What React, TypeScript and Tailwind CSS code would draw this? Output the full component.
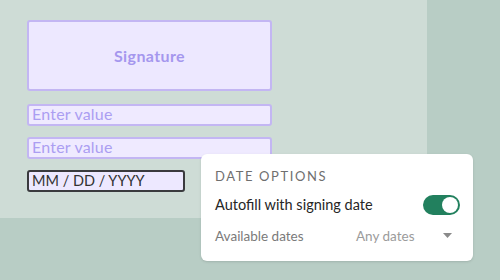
import React from "react";

function Toggle() {
  return (
    <div className="w-[37px] h-[20px] rounded-full bg-[#22805e] flex items-center justify-end pr-[2px]">
      <div className="w-[16px] h-[16px] rounded-full bg-white" />
    </div>
  );
}

function DateOptions() {
  return (
    <div className="absolute left-[201px] top-[154px] w-[272px] h-[107px] bg-white rounded-md shadow-sm pl-[14px] pr-[13px] pt-[14px] font-['Lato',sans-serif]">
      <div className="text-[13px] leading-[16px] tracking-[1.6px] text-[#6f6f6f]">DATE OPTIONS</div>
      <div className="mt-[10px] flex items-center justify-between">
        <span className="text-[14.5px] text-[#262626]">Autofill with signing date</span>
        <Toggle />
      </div>
      <div className="mt-[10px] flex items-center">
        <span className="text-[13.5px] text-[#7a7a7a] w-[141px]">Available dates</span>
        <span className="text-[13.5px] text-[#9b9b9b] flex-1">Any dates</span>
        <svg width="9" height="5" viewBox="0 0 9 5" className="mr-[8px]">
          <path d="M0 0 H9 L4.5 5 Z" fill="#8a8a8a" />
        </svg>
      </div>
    </div>
  );
}

function Field({ text }: { text: string }) {
  return (
    <div className="w-[245px] h-[22px] rounded-[3px] border-2 border-[#c3b6f3] bg-[#efeaff] flex items-center pl-[3px] pb-[2px]">
      <span className="font-['Lato',sans-serif] text-[16px] tracking-[0.2px] text-[#ab9ef2]">{text}</span>
    </div>
  );
}

export default function App() {
  return (
    <div className="w-[500px] h-[280px] bg-[#b8cdc5] relative overflow-hidden">
      <div className="w-[427px] h-[218px] bg-[#cedcd6] pt-[20px] pl-[27px] flex flex-col gap-[11px]">
        <div className="w-[245px] h-[71px] rounded-[3px] border-2 border-[#c3b6f3] bg-[#ede8ff] flex items-center justify-center mb-[2px]">
          <span className="font-['Lato',sans-serif] font-bold text-[16px] tracking-[0.4px] text-[#a597ee]">Signature</span>
        </div>
        <Field text="Enter value" />
        <Field text="Enter value" />
        <div className="w-[158px] h-[22px] rounded-[3px] border-2 border-[#3a3a3e] bg-[#ede8ff] flex items-center pl-[3px] pb-[1px]">
          <span className="font-['Lato',sans-serif] text-[14.5px] text-[#333333]">MM / DD / YYYY</span>
        </div>
      </div>
      <DateOptions />
    </div>
  );
}
